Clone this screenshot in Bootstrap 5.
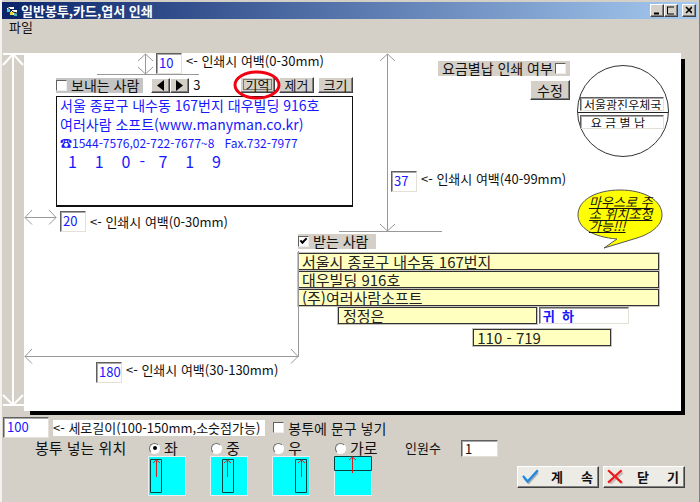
<!DOCTYPE html>
<html lang="ko">
<head>
<meta charset="utf-8">
<meta name="viewport" content="width=device-width, initial-scale=1">
<title>일반봉투,카드,엽서 인쇄</title>
<link href="https://cdn.jsdelivr.net/npm/bootstrap@5.3.0/dist/css/bootstrap.min.css" rel="stylesheet">
<style>
body{font:13px/16px "Noto Sans CJK KR","Liberation Sans",sans-serif;color:#111;background:#d4d0c8}
.app{border-left:2px solid #f4f2ee;border-right:1px solid #808080;min-height:100vh}
.titlebar{height:17px;margin:2px 2px 0 0;background:linear-gradient(90deg,#0a246a,#a6caf0);color:#fff;font-weight:700;padding:0 1px 0 4px}
.titlebar svg{margin-right:3px}
button.w{background:#d4d0c8;border:1px solid;border-color:#fff #404040 #404040 #fff;box-shadow:inset -1px -1px #808080;padding:0;line-height:14px;color:#111;text-align:center;white-space:pre}
button.cap{width:14px;height:13px;display:flex}
.menubar{height:34px;padding:0 7px}
.menubar a{color:#111;text-decoration:none}
.ruler{width:22px;padding-bottom:5px;flex:none}
.ruler i{width:2px;background:#fff}
.paper{background:#fff;min-width:0;padding-bottom:28px}
.sheet{padding-right:14px}
.edge-r{width:4px;background:#000;margin-top:6px;flex:none}
.edge-b{height:4px;background:#000;margin:0 14px 0 28px}
.f{border:1px solid;border-color:#606060 #e4e0d8 #e4e0d8 #606060;box-shadow:inset 1px 1px #a8a8a8;background:#fff;color:#1818ff;border-radius:0;padding:0 0 3px 3px;font-size:13px;line-height:16px;height:21px;min-width:0;outline:0}
.f-s{width:26px;padding-left:2px}
.f-len{width:46px}
.f-cnt{width:37px;height:17px;padding-bottom:0;color:#111}
.f-title{height:17px;padding-bottom:0}
.chk{appearance:none;width:11px;height:11px;margin:0;background:#fff;border:1px solid;border-color:#606060 #eee #eee #606060;flex:none;display:grid;place-items:center}
.chk:checked::after{content:"";width:7px;height:4px;border:solid #000;border-width:0 0 2px 2px;transform:rotate(-45deg);margin-top:-3px}
.rad{appearance:none;width:11px;height:11px;margin:0;background:#fff;border:1px solid;border-color:#707070 #fff #fff #707070;border-radius:50%;display:grid;place-items:center}
.rad:checked::after{content:"";width:4px;height:4px;background:#000;border-radius:50%}
.tag{background:#d4d0c8;height:15px;line-height:15px;font-size:14px}
.tag-dim{background:#c4c4c4}
.top-band{height:181px}
.sender{width:329px;padding-left:32px;flex:none}
.sender-top{padding:0 0 0 100px;height:24px}
.sender-row{margin-bottom:3px}
.sender-row button{min-width:35px}
.sender-row button.arr{min-width:0}
.sender-box{border:1px solid #111;border-bottom-width:2px;height:111px;padding:0 3px;color:#1818ff;white-space:pre}
.s14{font-size:14px;line-height:16px}
.s15{font-size:14px;line-height:22px}
.s12{font-size:12px;line-height:16px}
.s16{font-size:16px;line-height:20px;padding-left:8px}
.mid{padding:0 0 42px 38px}
.postage{padding-top:8px;width:132px}
.postage button{width:40px;height:20px}
.stamp{width:92px;height:92px;margin:12px 12px 0 7px;border:1px solid #333;border-radius:50%;padding:31px 0 0 2px;flex:none}
.stamp .f{width:84px;height:14px;display:block;color:#111;font-size:12px;line-height:12px;padding:0 0 0 3px}
.stamp hr{margin:1px 0 2px -2px;width:90px;border-top:1px solid #222;opacity:1}
.receiver{margin:0 22px 0 274px}
.y{background:#ffffc0;border:1px solid #333;box-shadow:0 0 0 1px #c4c4bc;color:#222;font-size:15px;line-height:15px;height:17px;padding:0 3px;border-radius:0;min-width:0;display:block;width:100%;outline:0}
.r-rows{gap:1px;margin-top:4px}
.name-col{padding:0 2px 0 40px}
.zip{width:44%;margin-top:4px}
.guides{left:0;top:0;pointer-events:none}
.bubble{right:18px;top:135px;width:86px;height:62px}
.bubble p{position:relative;font-size:13px;line-height:12px;font-style:italic;text-decoration:underline;padding:8px 4px 0 12px;margin:0;white-space:pre}
.bubble svg{left:0;top:0}
.ring{left:-8px;top:-7px;pointer-events:none}
.bottom{padding:2px 14px 4px 1px}
.len-label{padding-right:5px}
.opts{margin-top:2px}
.pos-label{width:114px;padding-left:32px;margin-right:32px;white-space:nowrap;overflow:visible}
.opt{width:62px}
.opt label{gap:4px;height:16px}
.opt svg{display:block;margin-left:-1px}
.t14{font-size:14px}
.t15{font-size:15px}
button.go{width:82px;height:22px;background:#ecebe6;font-weight:700;display:flex;align-items:center;padding:0 5px 0 3px}
</style>
<script src="https://cdn.jsdelivr.net/npm/bootstrap@5.3.0/dist/js/bootstrap.bundle.min.js"></script>
</head>
<body>
<div class="app d-flex flex-column">
  <header class="titlebar d-flex align-items-center">
    <svg width="12" height="12" viewBox="0 0 12 12"><path d="M1 2h7v2H1z" fill="#fff"/><path d="M1 4h3v3H1z" fill="#48c8d8"/><path d="M5 5h6v5H5z" fill="#fff"/><path d="M4 7h3v3H4z" fill="#e8d848"/><path d="M8 8h3v3H8z" fill="#48b8a8"/><path d="M1 2l3 2 3 3 4 1" stroke="#111" fill="none"/></svg>
    <span>일반봉투,카드,엽서 인쇄</span>
    <div class="ms-auto d-flex">
      <button class="w cap" aria-label="최소화"><svg width="12" height="11"><path d="M3 8.500h5" stroke="#000" stroke-width="2"/></svg></button>
      <button class="w cap" aria-label="최대화"><svg width="12" height="11"><path d="M2 2h8M2.500 2v7h7V2" fill="none" stroke="#000"/></svg></button>
      <button class="w cap ms-1" aria-label="닫기"><svg width="12" height="11"><path d="M3 2l6 6M9 2l-6 6" stroke="#000" stroke-width="1.600"/></svg></button>
    </div>
  </header>
  <nav class="menubar"><a href="#">파일</a></nav>

  <main class="d-flex sheet">
    <div class="ruler d-flex flex-column align-items-center">
      <svg width="22" height="13"><path d="M1 1h21M1 12L11 1L21 12M11 1v12" fill="none" stroke="#fff" stroke-width="2"/></svg>
      <i class="flex-grow-1"></i>
      <svg width="22" height="12"><path d="M1 11h21M1 1l10 10L21 1M11 0v10" fill="none" stroke="#fff" stroke-width="2"/></svg>
    </div>
    <section class="paper flex-grow-1 position-relative">
      <svg class="guides position-absolute" width="420" height="330" fill="none" stroke="#999">
        <path d="M121.500 1v20M114 8l7.500-7 7.500 7M114 14l7.500 7 7.500-7M73 21.500h102"/>
        <path d="M1 164.500h31M8 157l-7 7.500 7 7M25 157l7 7.500-7 7"/>
        <path d="M363.500 1v177M356 8l7.500-7 7.500 7M356 171l7.500 7 7.500-7M315 178.500h103"/>
        <path d="M1 303.500h273M8 296l-7 7.500 7 7M267 296l7 7.500-7 7M274.500 198v106"/>
      </svg>
      <div class="top-band d-flex">
        <div class="sender">
          <div class="sender-top d-flex align-items-start">
            <input id="mTop" class="f f-s" value="10"><label for="mTop" class="ms-1">&lt;- 인쇄시 여백(0-30mm)</label>
          </div>
          <div class="sender-row d-flex align-items-center">
            <label class="tag tag-dim d-flex align-items-center gap-1 pe-1"><input type="checkbox" class="chk">보내는 사람</label>
            <button class="w arr ms-2 d-flex px-1" aria-label="이전"><svg width="9" height="13"><path d="M8 1v11L1 6.500z"/></svg></button>
            <button class="w arr d-flex px-1" aria-label="다음"><svg width="9" height="13"><path d="M1 1v11l7-5.500z"/></svg></button>
            <span class="ms-1">3</span>
            <div class="ms-auto d-flex gap-1">
              <div class="position-relative"><button class="w">기억</button>
                <svg class="ring position-absolute" width="50" height="31"><ellipse cx="25" cy="15" rx="22" ry="13" fill="none" stroke="#f00010" stroke-width="3"/><path d="M11.500 9.500h28v10h-28z" fill="none" stroke="#222" stroke-dasharray="1 1"/></svg></div>
              <button class="w">제거</button>
              <button class="w">크기</button>
            </div>
          </div>
          <div class="sender-box"><div class="s14">서울 종로구 내수동 167번지 대우빌딩 916호</div><div class="s15">여러사람 소프트(www.manyman.co.kr)</div><div class="s12">☎1544-7576,02-722-7677~8   Fax.732-7977</div><div class="s16">1    1    0  -   7    1    9</div></div>
          <div class="d-flex align-items-center pt-1 ps-1">
            <input id="mLeft" class="f f-s" value="20"><label for="mLeft" class="ms-1">&lt;- 인쇄시 여백(0-30mm)</label>
          </div>
        </div>
        <div class="flex-grow-1 d-flex flex-column">
          <div class="postage align-self-end d-flex flex-column align-items-end gap-1">
            <label class="tag d-flex align-items-center justify-content-between w-100 px-1 text-nowrap">요금별납 인쇄 여부 <input type="checkbox" class="chk"></label>
            <button class="w t14">수정</button>
          </div>
          <div class="mid d-flex align-items-start text-nowrap mt-auto">
            <input id="mTop2" class="f f-s" value="37"><label for="mTop2" class="ms-1">&lt;- 인쇄시 여백(40-99mm)</label>
          </div>
        </div>
        <div class="stamp"><input class="f" aria-label="우체국" value="서울광진우체국"><hr><input class="f" aria-label="요금별납" value="  요 금 별 납"></div>
      </div>
      <div class="bubble position-absolute">
        <svg class="position-absolute" width="86" height="62"><path d="M40 51C16 49 1 40 1 27C1 12 19 2 43 2S85 12 85 27C85 38 73 46 60 50L27 60L40 51z" fill="#ff0" stroke="#555"/></svg>
        <p>마우스로 주
소 위치조정
가능!!!</p>
      </div>
      <div class="receiver">
        <div class="d-flex"><label class="tag d-flex align-items-center gap-1 pe-2"><input type="checkbox" class="chk" checked>받는 사람</label></div>
        <div class="r-rows d-flex flex-column">
          <input class="y" aria-label="주소 1" value="서울시 종로구 내수동 167번지">
          <input class="y" aria-label="주소 2" value="대우빌딩 916호">
          <input class="y" aria-label="회사" value="(주)여러사람소프트">
          <div class="row g-0">
            <div class="col-8 name-col"><input class="y ps-1" aria-label="이름" value="정정은"></div>
            <div class="col-3"><input class="f f-title w-100 fw-bold d-block" aria-label="호칭" value="귀  하"></div>
          </div>
          <div class="d-flex justify-content-end pe-5"><div class="zip"><input class="y" aria-label="우편번호" value="110 - 719"></div></div>
        </div>
      </div>
      <div class="d-flex pt-3 ps-5"><div class="d-flex ps-4">
        <input id="mLeft2" class="f f-s" value="180"><label for="mLeft2" class="ms-1">&lt;- 인쇄시 여백(30-130mm)</label>
      </div></div>
    </section>
    <div class="edge-r"></div>
  </main>
  <div class="edge-b"></div>

  <footer class="bottom">
    <div class="d-flex align-items-center">
      <input id="len" class="f f-len" value="100"><label for="len" class="bg-white ms-1 len-label">&lt;- 세로길이(100-150mm,소숫점가능)</label>
      <label class="d-flex align-items-center gap-1 ms-2 t14"><input type="checkbox" class="chk">봉투에 문구 넣기</label>
    </div>
    <div class="opts d-flex">
      <span class="pos-label t15">봉투 넣는 위치</span>
      <div class="opt"><label class="d-flex align-items-center t15"><input type="radio" name="p" class="rad" checked>좌</label>
        <svg width="38" height="40"><path d="M.5.5h37v39H.5z" fill="#0ff" stroke="#eee"/><path d="M2.500 3.500h11v33h-11z" fill="none" stroke="#044"/><path d="M8.500 21V4M5 7l3.500-3L12 7" fill="none" stroke="#d02020"/></svg></div>
      <div class="opt"><label class="d-flex align-items-center t15"><input type="radio" name="p" class="rad">중</label>
        <svg width="38" height="40"><path d="M.5.5h37v39H.5z" fill="#0ff" stroke="#eee"/><path d="M12.500 3.500h11v33h-11z" fill="none" stroke="#044"/><path d="M17.500 21V4M14 7l3.500-3L21 7" fill="none" stroke="#d02020"/></svg></div>
      <div class="opt"><label class="d-flex align-items-center t15"><input type="radio" name="p" class="rad">우</label>
        <svg width="38" height="40"><path d="M.5.5h37v39H.5z" fill="#0ff" stroke="#eee"/><path d="M23.500 3.500h11v33h-11z" fill="none" stroke="#044"/><path d="M29.500 21V4M26 7l3.500-3L33 7" fill="none" stroke="#d02020"/></svg></div>
      <div class="opt"><label class="d-flex align-items-center text-nowrap t15"><input type="radio" name="p" class="rad">가로</label>
        <svg width="38" height="40"><path d="M.5.5h37v39H.5z" fill="#0ff" stroke="#eee"/><path d="M.5.5h37v14H.5z" fill="none" stroke="#044"/><path d="M18.500 17V1M15 4l3.500-3L22 4" fill="none" stroke="#d02020"/></svg></div>
      <label for="cnt" class="ms-2">인원수</label>
      <div class="ms-3 ps-1"><input id="cnt" class="f f-cnt" value="1"></div>
      <div class="ms-auto d-flex gap-1 align-self-end mb-2">
        <button class="w go"><svg width="20" height="16" viewBox="0 0 16 14"><path d="M2 8l4 4 8-9" fill="none" stroke="#aaa" stroke-width="2"/><path d="M1 6l4 5 9-10" fill="none" stroke="#1e88e5" stroke-width="2"/></svg><span class="ms-auto">계     속</span></button>
        <button class="w go"><svg width="18" height="16" viewBox="0 0 16 14"><path d="M3 3l11 10M14 3L3 13" stroke="#bbb" stroke-width="2"/><path d="M1 1l12 11M13 1L1 12" stroke="#f01818" stroke-width="2"/></svg><span class="ms-auto">닫     기</span></button>
      </div>
    </div>
  </footer>
</div>
</body>
</html>
